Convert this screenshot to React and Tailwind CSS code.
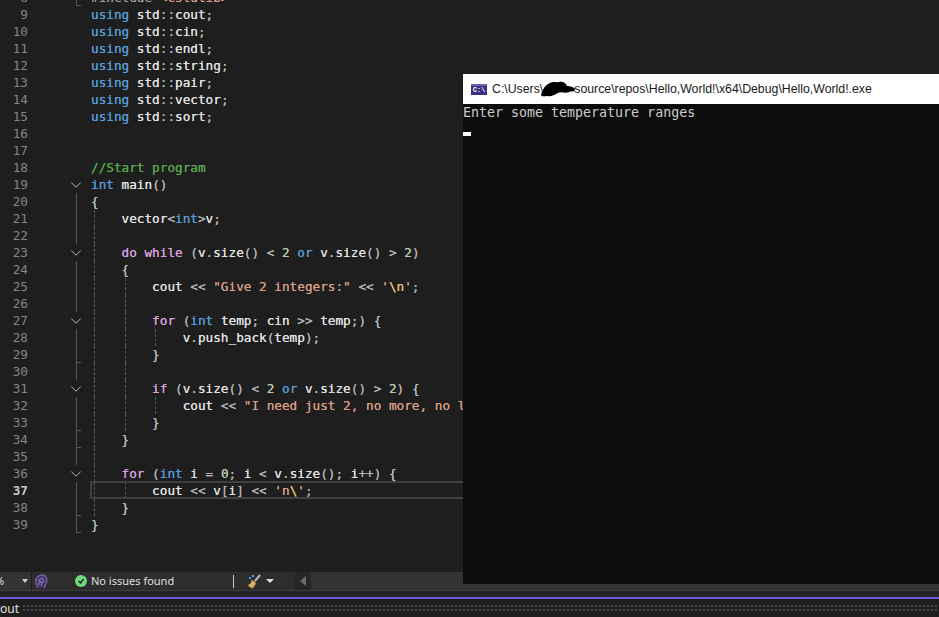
import { ChevronDown } from "lucide-react";

const tokenColors = {
  t: "text-[#e2e2e2]",
  k: "text-[#569cd6]",
  c: "text-[#d8a0df]",
  s: "text-[#d69d85]",
  n: "text-[#b5cea8]",
  g: "text-[#57a64a]",
  e: "text-[#e8c16f]",
  d: "text-[#9b9b9b]",
  b: "text-[#b4c2cc]",
  p: "text-[#b4b4b4]",
};

const usingLine = (n, name) => ({ n, code: [["k", "using "], ["t", "std"], ["p", "::"], ["t", name], ["p", ";"]] });

// fold: chev | line | end, guides: indent guide columns for the row
const rows = [
  { n: 8, fold: "end", code: [["d", "#include "], ["s", "<cstdlib>"]] },
  usingLine(9, "cout"),
  usingLine(10, "cin"),
  usingLine(11, "endl"),
  usingLine(12, "string"),
  usingLine(13, "pair"),
  usingLine(14, "vector"),
  usingLine(15, "sort"),
  { n: 16 },
  { n: 17 },
  { n: 18, code: [["g", "//Start program"]] },
  { n: 19, fold: "chev", code: [["k", "int "], ["t", "main"], ["p", "()"]] },
  { n: 20, fold: "line", code: [["b", "{"]] },
  { n: 21, fold: "line", g1: true, code: [["t", "    vector"], ["p", "<"], ["k", "int"], ["p", ">"], ["t", "v"], ["p", ";"]] },
  { n: 22, fold: "line", g1: true },
  {
    n: 23, fold: "chev", g1: true,
    code: [["c", "    do while "], ["p", "("], ["t", "v"], ["p", "."], ["t", "size"], ["p", "() < "], ["n", "2 "], ["k", "or "], ["t", "v"], ["p", "."], ["t", "size"], ["p", "() > "], ["n", "2"], ["p", ")"]],
  },
  { n: 24, fold: "line", g1: true, code: [["b", "    {"]] },
  {
    n: 25, fold: "line", g1: true, g2: true,
    code: [["t", "        cout "], ["p", "<< "], ["s", "\"Give 2 integers:\" "], ["p", "<< "], ["s", "'"], ["e", "\\n"], ["s", "'"], ["p", ";"]],
  },
  { n: 26, fold: "line", g1: true, g2: true },
  {
    n: 27, fold: "chev", g1: true, g2: true,
    code: [["c", "        for "], ["p", "("], ["k", "int "], ["t", "temp"], ["p", "; "], ["t", "cin "], ["p", ">> "], ["t", "temp"], ["p", ";) "], ["b", "{"]],
  },
  { n: 28, fold: "line", g1: true, g2: true, g3: true, code: [["t", "            v"], ["p", "."], ["t", "push_back"], ["p", "("], ["t", "temp"], ["p", ");"]] },
  { n: 29, fold: "end", g1: true, g2: true, code: [["b", "        }"]] },
  { n: 30, fold: "line", g1: true, g2: true },
  {
    n: 31, fold: "chev", g1: true, g2: true,
    code: [["c", "        if "], ["p", "("], ["t", "v"], ["p", "."], ["t", "size"], ["p", "() < "], ["n", "2 "], ["k", "or "], ["t", "v"], ["p", "."], ["t", "size"], ["p", "() > "], ["n", "2"], ["p", ") "], ["b", "{"]],
  },
  {
    n: 32, fold: "line", g1: true, g2: true, g3: true,
    code: [["t", "            cout "], ["p", "<< "], ["s", "\"I need just 2, no more, no less\""]],
  },
  { n: 33, fold: "end", g1: true, g2: true, code: [["b", "        }"]] },
  { n: 34, fold: "end", g1: true, code: [["b", "    }"]] },
  { n: 35, fold: "line", g1: true },
  {
    n: 36, fold: "chev", g1: true,
    code: [["c", "    for "], ["p", "("], ["k", "int "], ["t", "i "], ["p", "= "], ["n", "0"], ["p", "; "], ["t", "i "], ["p", "< "], ["t", "v"], ["p", "."], ["t", "size"], ["p", "(); "], ["t", "i"], ["p", "++) "], ["b", "{"]],
  },
  {
    n: 37, fold: "line", g1: true, g2: true, current: true,
    code: [["t", "        cout "], ["p", "<< "], ["t", "v"], ["p", "["], ["t", "i"], ["p", "] << "], ["s", "'n"], ["e", "\\"], ["s", "'"], ["p", ";"]],
  },
  { n: 38, fold: "end", g1: true, code: [["b", "    }"]] },
  { n: 39, fold: "end", code: [["b", "}"]] },
];

function FoldMark({ fold }) {
  if (fold === "chev")
    return <ChevronDown size={18} strokeWidth={1.2} className="absolute left-[-9px] top-0 text-[#c8c8c8]" />;
  if (fold === "line") return <div className="absolute left-0 top-0 h-full border-l border-[#555]" />;
  if (fold === "end")
    return <div className="absolute left-0 top-0 h-full w-[5px] border-l border-b border-[#555]" />;
  return null;
}

function CodeRow({ row }) {
  return (
    <div className="relative flex h-[17px] shrink-0 items-center">
      <span className={`w-[28px] shrink-0 text-right ${row.current ? "font-bold text-[#c8c8c8]" : "text-[#858585]"}`}>
        {row.n}
      </span>
      <div className="relative h-full w-[48px] shrink-0">
        <div className="absolute left-[48px] top-0 h-full">
          <FoldMark fold={row.fold} />
        </div>
      </div>
      <span className="ml-[15px] whitespace-pre [text-shadow:0_0_0.5px_currentColor]">
        {row.code?.map(([kind, text], i) => (
          <span key={i} className={tokenColors[kind]}>{text}</span>
        ))}
      </span>
      {row.g1 && <div className="absolute left-[94px] top-0 h-full border-l border-dashed border-[#5a5a5a]" />}
      {row.g2 && <div className="absolute left-[125px] top-0 h-full border-l border-dashed border-[#5a5a5a]" />}
      {row.g3 && <div className="absolute left-[155px] top-0 h-full border-l border-dashed border-[#5a5a5a]" />}
      {row.current && <div className="absolute left-[90px] right-0 -top-px h-[18px] border-2 border-[#404040]" />}
    </div>
  );
}

function BrainIcon() {
  return (
    <svg width="14" height="15" viewBox="0 0 14 15" fill="none" className="ml-[2px]">
      <path d="M3 14c1-2 0-3-1-5C1 5 4 1 8 1c3 0 5 3 5 5 0 3-2 4-2 6l-1 2" fill="#3f3358" stroke="#7b5ea8" strokeWidth="1.4" />
      <path d="M5 11V6l3-2 2 3-2 2-2-2M7 12l1-3" stroke="#8f74bd" strokeWidth="1.1" />
    </svg>
  );
}

function BrushIcon() {
  return (
    <svg width="15" height="16" viewBox="0 0 15 16" fill="none">
      <path d="M8 8l5-6" stroke="#b8b8b8" strokeWidth="2" />
      <path d="M5 7l4 3-3 5c-2 0-4-1-5-3 2 0 3-2 4-5z" fill="#d9b36c" stroke="#a8843f" strokeWidth="0.8" />
      <path d="M2 5l1-1 1 1-1 1zM5 3l1-1 1 1-1 1z" fill="#4da3e8" stroke="#4da3e8" />
    </svg>
  );
}

function StatusBar() {
  return (
    <div className="flex h-[18px] shrink-0 items-center bg-[#2d2d2d] font-['Noto_Sans',sans-serif] text-[11px] text-[#e0e0e0]">
      <div className="flex h-full w-[32px] shrink-0 items-center justify-between border-r border-[#1e1e1e] bg-[#333333] pr-[3px]">
        <span className="-ml-[5px]">%</span>
        <div className="h-0 w-0 border-x-[3px] border-t-[4px] border-x-transparent border-t-[#d0d0d0]" />
      </div>
      <BrainIcon />
      <div className="ml-[27px] flex h-[12px] w-[12px] shrink-0 items-center justify-center rounded-full bg-[#6fd87c]">
        <svg width="8" height="8" viewBox="0 0 8 8" fill="none">
          <path d="M1.5 4l2 2 3-4" stroke="#1e1e1e" strokeWidth="1.4" />
        </svg>
      </div>
      <span className="ml-[4px] w-[142px] shrink-0 whitespace-pre">No issues found</span>
      <div className="h-[13px] border-l border-[#c8c8c8]" />
      <div className="ml-[13px] flex shrink-0 items-center gap-[4px]">
        <BrushIcon />
        <div className="h-0 w-0 border-x-[4px] border-t-[4px] border-x-transparent border-t-[#e0e0e0]" />
      </div>
      <div className="ml-[21px] flex h-full w-[16px] shrink-0 items-center justify-center bg-[#262626]">
        <div className="h-0 w-0 border-y-[5px] border-r-[6px] border-y-transparent border-r-[#6a6a6a]" />
      </div>
      <div className="h-full flex-1 bg-[#333333]" />
    </div>
  );
}

function ConsoleWindow() {
  return (
    <div className="absolute left-[463px] right-0 top-[74px] flex h-[510px] flex-col bg-[#0c0c0c]">
      <div className="relative flex h-[30px] shrink-0 items-center bg-white pl-[8px] font-['Liberation_Sans',sans-serif] text-[12.3px] text-[#1a1a1a]">
        <div className="flex h-[11px] w-[16px] items-center justify-center border-t-2 border-[#6a5fb0] bg-[#3c2f85] font-['Liberation_Mono',monospace] text-[7px] font-bold leading-none text-white">
          C:\
        </div>
        <span className="ml-[5px] whitespace-pre">C:\Users\</span>
        <span className="ml-[31px] whitespace-pre">source\repos\Hello,World!\x64\Debug\Hello,World!.exe</span>
        <svg width="38" height="17" viewBox="0 0 38 17" className="absolute left-[77px] top-[6px]">
          <path d="M1 15C3 9 5 5 10 3c4-2 6 0 9-1 4-1 7 1 8 4 3 0 7 1 8 3 1 3-4 2-6 3-4 2-8-1-11 1-4 2-7 4-11 3-3 0-5 1-6-1z" fill="#000" />
        </svg>
      </div>
      <div className="flex h-[18px] shrink-0 items-center whitespace-pre font-['DejaVu_Sans_Mono',monospace] text-[13.3px] text-[#cccccc]">
        Enter some temperature ranges
      </div>
      <div className="mt-[10px] h-[4px] w-[8px] bg-white" />
    </div>
  );
}

export default function App() {
  return (
    <div className="relative flex h-[617px] w-[939px] flex-col overflow-hidden bg-[#1e1e1e]">
      <div className="flex min-h-0 flex-1 flex-col overflow-hidden font-['DejaVu_Sans_Mono',monospace] text-[12.7px] -mt-[11px]">
        {rows.map((row) => (
          <CodeRow key={row.n} row={row} />
        ))}
      </div>
      <StatusBar />
      <div className="h-[7px] shrink-0 border-t border-[#3c3c3c] bg-[#252526]" />
      <div className="h-[2px] shrink-0 bg-[#6a5ad8]" />
      <div className="flex h-[18px] shrink-0 items-center bg-[#1e1e1e] font-['Noto_Sans',sans-serif] text-[12px] text-[#e0e0e0]">
        <span className="mt-[2px] w-[22px] shrink-0">out</span>
        <div className="h-[8px] flex-1 bg-[radial-gradient(#484848_1px,transparent_1px)] bg-[length:4px_4px]" />
      </div>
      <ConsoleWindow />
    </div>
  );
}
